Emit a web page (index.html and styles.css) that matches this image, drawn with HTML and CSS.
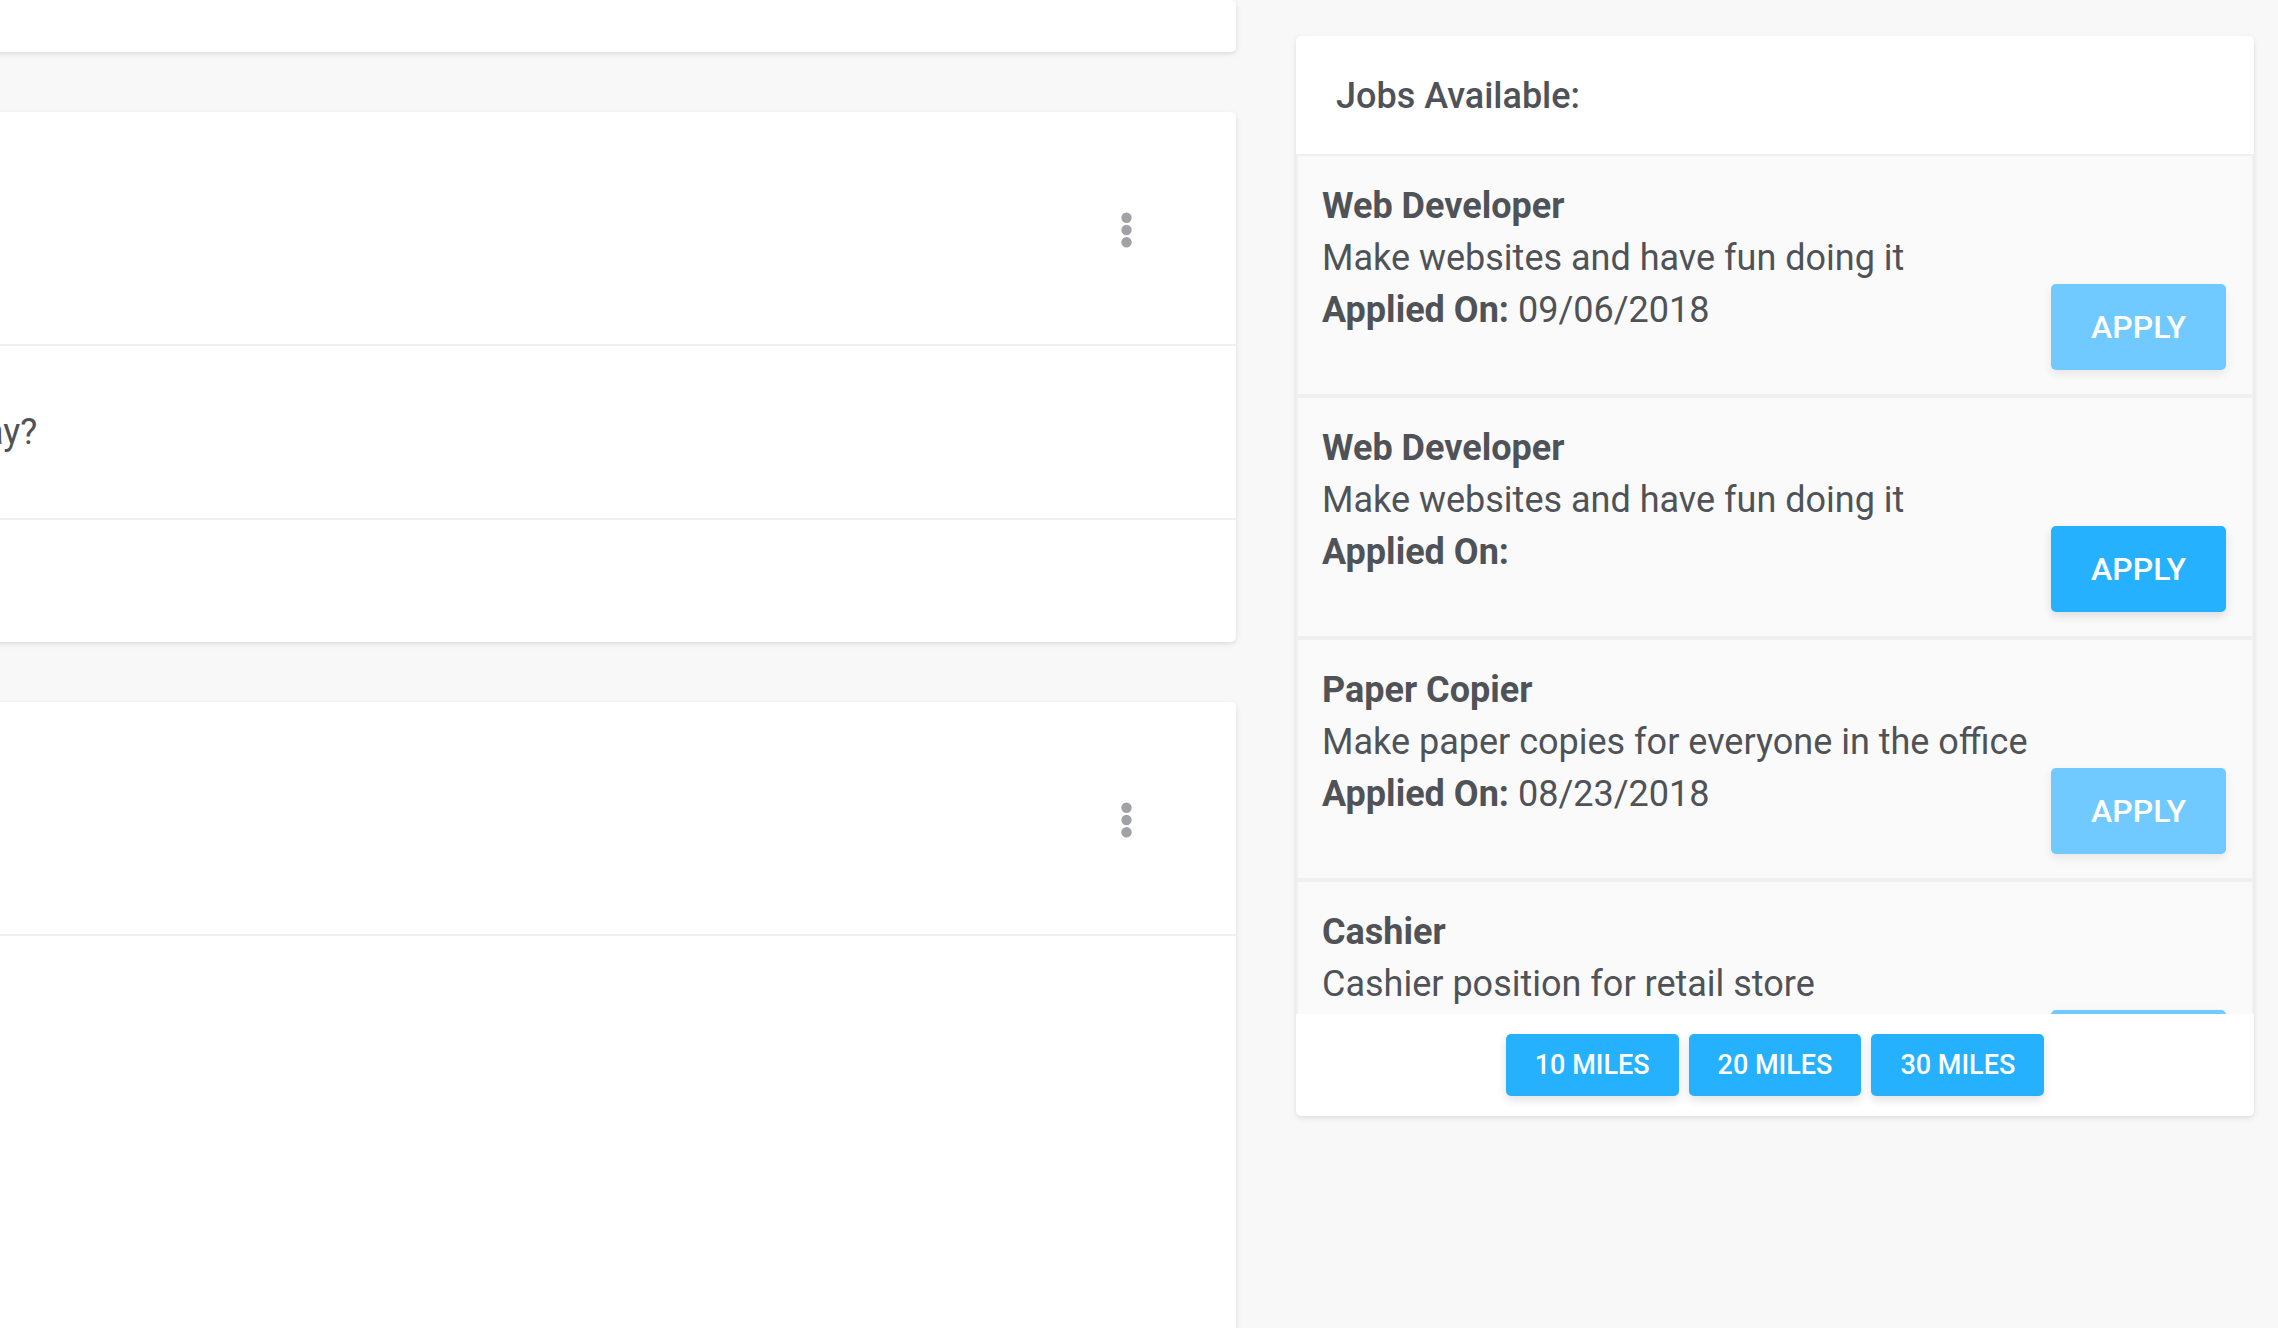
FILE: index.html
```html
<!DOCTYPE html>
<html lang="en">
<head>
<meta charset="utf-8">
<title>Jobs</title>
<link rel="stylesheet" href="styles.css">
</head>
<body>
<main class="page">
  <section class="feed">
    <article class="card card-tail"></article>
    <article class="card">
      <header class="post-header">
        <button class="menu" type="button" aria-label="Post options">
          <svg width="12" height="36" viewBox="0 0 12 36"><circle cx="5.5" cy="5.7" r="5.2"/><circle cx="5.5" cy="18" r="5.2"/><circle cx="5.5" cy="30.3" r="5.2"/></svg>
        </button>
      </header>
      <p class="post-text">ay?</p>
      <footer class="post-footer"></footer>
    </article>
    <article class="card card-last">
      <header class="post-header">
        <button class="menu" type="button" aria-label="Post options">
          <svg width="12" height="36" viewBox="0 0 12 36"><circle cx="5.5" cy="5.7" r="5.2"/><circle cx="5.5" cy="18" r="5.2"/><circle cx="5.5" cy="30.3" r="5.2"/></svg>
        </button>
      </header>
    </article>
  </section>
  <aside class="card jobs">
    <h2 class="jobs-title">Jobs Available:</h2>
    <ul class="job-list">
      <li class="job">
        <div class="job-info">
          <h3>Web Developer</h3>
          <p>Make websites and have fun doing it</p>
          <p><b>Applied On:</b> 09/06/2018</p>
        </div>
        <button class="btn apply" type="button" disabled>APPLY</button>
      </li>
      <li class="job">
        <div class="job-info">
          <h3>Web Developer</h3>
          <p>Make websites and have fun doing it</p>
          <p><b>Applied On:</b></p>
        </div>
        <button class="btn apply" type="button">APPLY</button>
      </li>
      <li class="job">
        <div class="job-info">
          <h3>Paper Copier</h3>
          <p>Make paper copies for everyone in the office</p>
          <p><b>Applied On:</b> 08/23/2018</p>
        </div>
        <button class="btn apply" type="button" disabled>APPLY</button>
      </li>
      <li class="job">
        <div class="job-info">
          <h3>Cashier</h3>
          <p>Cashier position for retail store</p>
        </div>
        <button class="btn apply" type="button" disabled>APPLY</button>
      </li>
    </ul>
    <footer class="distances">
      <button class="btn" type="button">10 MILES</button>
      <button class="btn" type="button">20 MILES</button>
      <button class="btn" type="button">30 MILES</button>
    </footer>
  </aside>
</main>
</body>
</html>
```
FILE: styles.css
```css
* {
  box-sizing: border-box;
}

body {
  margin: 0;
  background: #f8f8f8;
  color: #4f5257;
  font: 36px/52px Roboto, sans-serif;
}

h2, h3, p, ul {
  margin: 0;
  padding: 0;
  font-size: inherit;
}

.page {
  display: grid;
  grid-template-columns: minmax(0, 1236fr) minmax(0, 958fr);
  gap: 60px;
  height: 100vh;
  padding-right: 24px;
  overflow: hidden;
}

.feed {
  display: flex;
  flex-direction: column;
  gap: 60px;
  margin-left: -16px;
}

.card {
  background: #fff;
  border-radius: 5px;
  box-shadow: 0 2px 4px rgba(0, 0, 0, .08), 0 2px 10px rgba(0, 0, 0, .04);
}

.card-tail {
  height: 52px;
}

.card-last {
  flex: 1;
  margin-bottom: -20px;
}

.post-header {
  display: flex;
  align-items: center;
  justify-content: flex-end;
  height: 234px;
  padding: 4px 103px 0 0;
  border-bottom: 2px solid #f0f0f0;
}

.menu {
  display: flex;
  padding: 0;
  border: 0;
  background: none;
  fill: #a1a2a5;
}

.post-text {
  padding: 60px 0;
  border-bottom: 2px solid #f0f0f0;
}

.post-footer {
  height: 122px;
}

.jobs {
  align-self: start;
  margin-top: 36px;
}

.jobs-title {
  padding: 34px 40px 32px;
  font-weight: 500;
}

.job-list {
  height: 860px;
  overflow: hidden;
  list-style: none;
}

.job {
  display: flex;
  align-items: flex-end;
  justify-content: space-between;
  height: 242px;
  padding: 24px 26px 24px 24px;
  background: #fafafa;
  border: 2px solid #f0f0f0;
}

.job-info {
  align-self: flex-start;
}

.job h3, .job b {
  font-weight: 700;
}

.distances {
  display: flex;
  justify-content: center;
  gap: 10px;
  padding: 20px;
}

.btn {
  padding: 15px 29px;
  border: 0;
  border-radius: 5px;
  background: #26b1ff;
  color: #fff;
  font: 500 27px/32px Roboto, sans-serif;
  white-space: nowrap;
  box-shadow: 0 4px 10px rgba(0, 0, 0, .12);
}

.apply {
  padding: 24px 40px;
  font-size: 32px;
  line-height: 38px;
}

.btn:disabled {
  background: #70caff;
  box-shadow: 0 4px 10px rgba(0, 0, 0, .08);
}
```
